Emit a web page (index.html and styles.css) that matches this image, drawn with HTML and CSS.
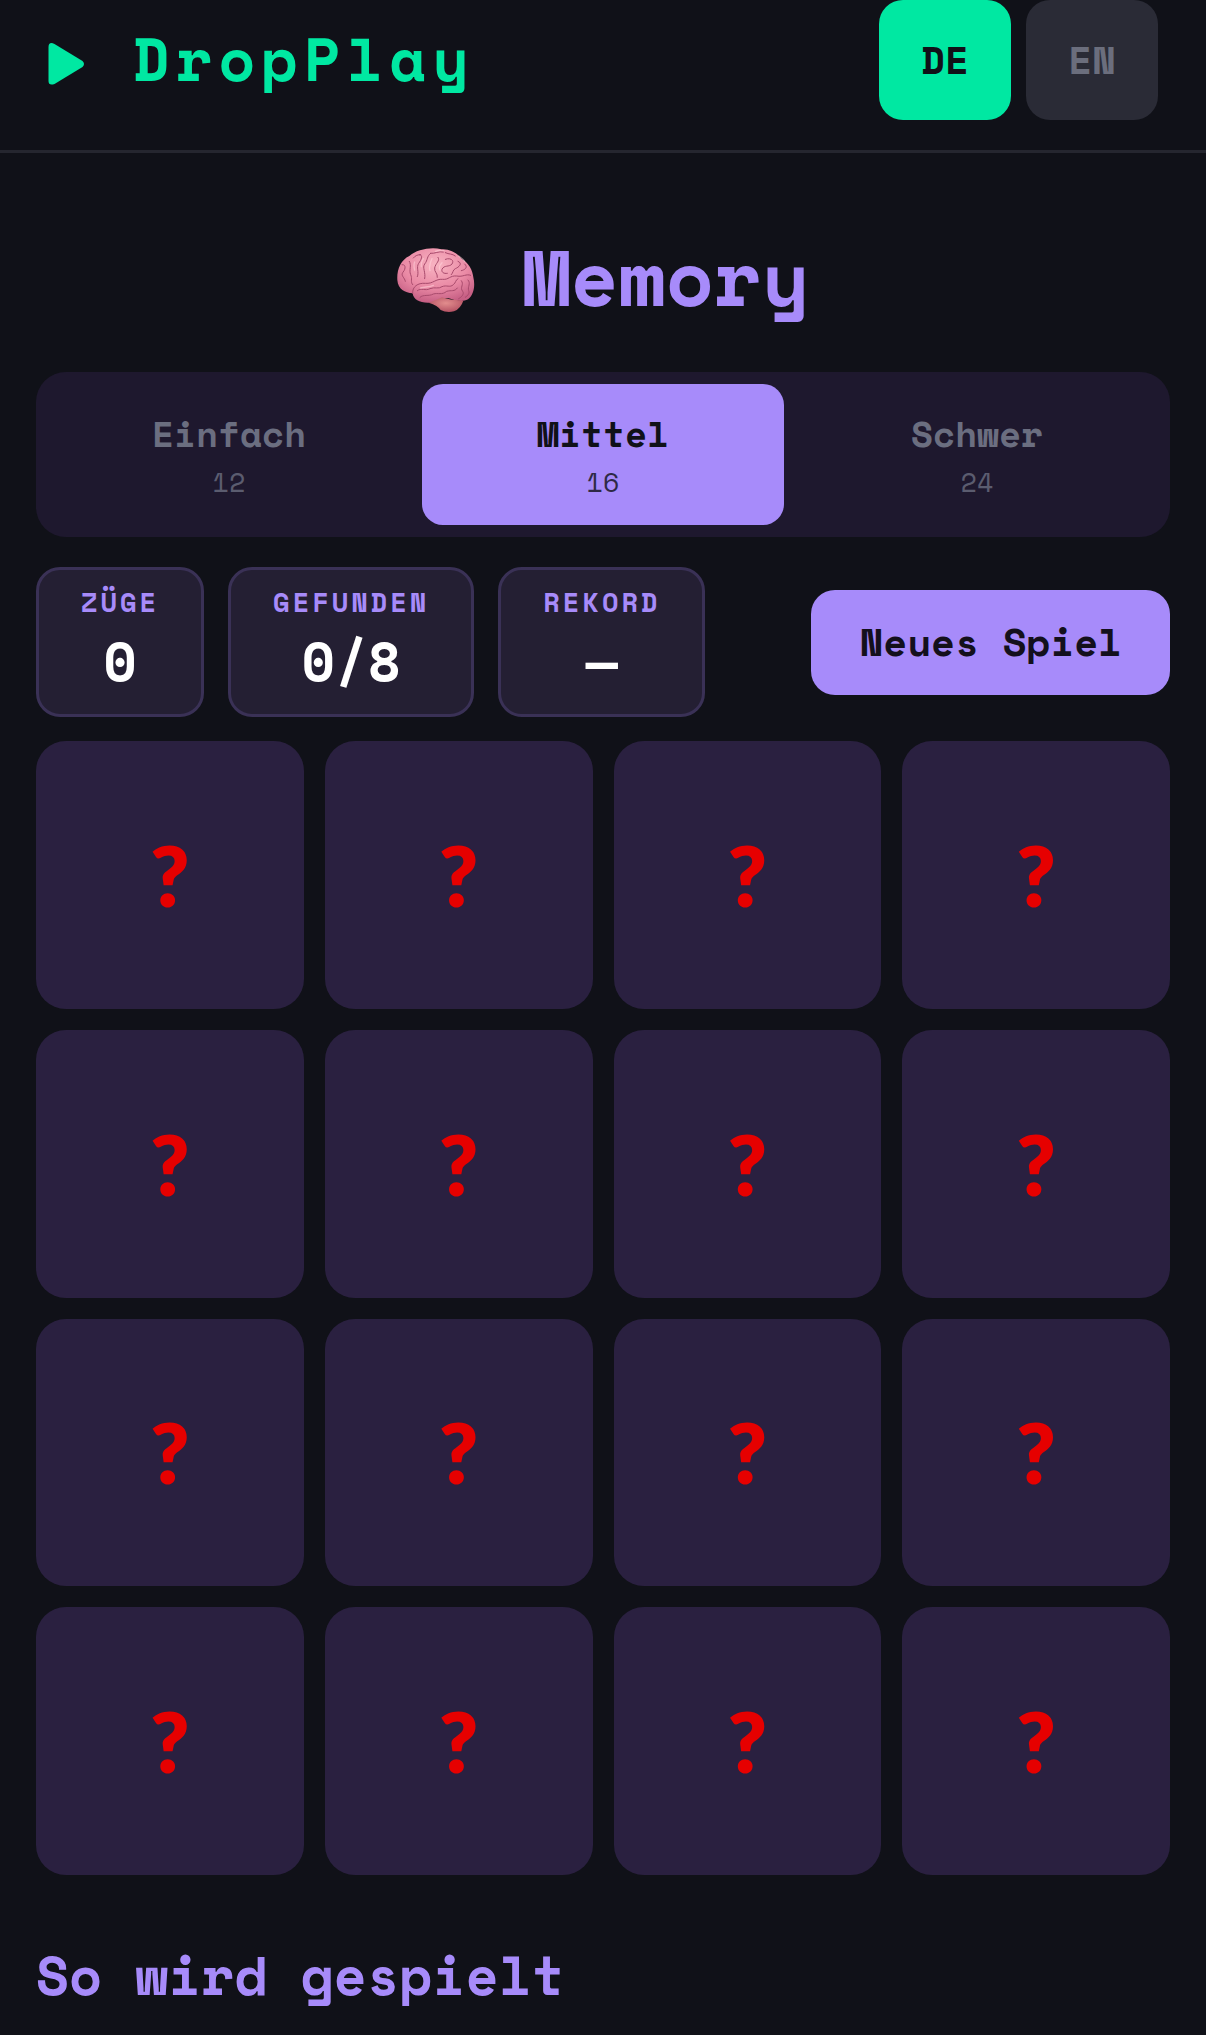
FILE: index.html
```html
<!DOCTYPE html>
<html lang="de">
<head>
<meta charset="utf-8">
<meta name="viewport" content="width=device-width, initial-scale=1">
<title>DropPlay – Memory</title>
<link rel="stylesheet" href="styles.css">
</head>
<body>
<header class="topbar">
  <a class="logo" href="#">
    <svg class="logo-icon" viewBox="0 0 36 42" aria-hidden="true"><path d="M0 4Q0 0 3 0Q4 0 6 1L34 18Q37 21 34 24L6 41Q0 43 0 38Z" fill="currentColor"/></svg>
    <span>DropPlay</span>
  </a>
  <nav class="langs" aria-label="Sprache">
    <button class="lang lang-active" type="button">DE</button>
    <button class="lang" type="button">EN</button>
  </nav>
</header>
<main class="page">
  <h1 class="title">
    <svg class="brain" viewBox="81 84 234 192" aria-hidden="true">
      <defs>
        <radialGradient id="lobe" cx="0.5" cy="0.3" r="0.7"><stop offset="0" stop-color="#f8b4c2"/><stop offset="0.6" stop-color="#ea8aa5"/><stop offset="1" stop-color="#c65f84"/></radialGradient>
        <radialGradient id="stem" cx="0.5" cy="0.4" r="0.6"><stop offset="0" stop-color="#e28d8d"/><stop offset="1" stop-color="#b55264"/></radialGradient>
      </defs>
      <path d="M82 180C80 150 92 120 118 108C140 88 185 80 214 88C240 86 262 100 274 116C296 128 308 150 310 172C316 195 312 225 294 238C275 248 252 240 236 235C215 232 205 248 180 248C152 250 130 240 128 220C105 218 84 208 82 180Z" fill="url(#lobe)"/>
      <path d="M176 248Q206 238 216 232Q238 240 280 242Q272 266 252 274Q230 279 212 270Q204 256 176 248Z" fill="url(#stem)"/>
      <g fill="none" stroke="#a84a6c" stroke-width="3" stroke-linecap="round" stroke-linejoin="round">
        <path d="M128 220C126 200 144 188 166 190C190 192 196 176 218 178C236 180 240 166 260 168C280 172 288 160 302 166"/>
        <path d="M96 134C110 132 106 150 98 158C92 168 104 172 106 184M118 124C126 136 116 150 122 164C128 176 120 186 128 194"/>
        <path d="M148 104C162 104 152 122 146 130C138 142 148 156 142 170M130 114C136 106 144 104 152 104"/>
        <path d="M182 100C170 108 174 120 164 132C156 144 168 156 164 176M182 100C194 102 206 92 220 96"/>
        <path d="M204 112C212 122 196 130 194 144C192 156 204 160 202 172M226 98C238 104 246 100 256 108"/>
        <path d="M226 118C240 112 254 120 246 132C238 142 222 134 216 148C214 156 220 162 232 160"/>
        <path d="M264 124C280 130 266 142 256 146C248 150 250 158 244 164M284 132C296 142 284 150 274 152"/>
        <path d="M142 212C154 202 166 214 180 206C194 200 206 208 216 200C230 194 240 204 250 194C258 188 256 180 264 176"/>
        <path d="M150 232C160 222 176 230 190 222C204 218 216 226 230 214C244 210 254 216 262 204M274 182C284 194 268 202 278 214C284 222 274 232 266 236"/>
        <path d="M294 180C304 190 292 200 296 212C300 220 292 228 286 232"/>
      </g>
      <g fill="none" stroke="#ffd3da" stroke-width="4" stroke-linecap="round" opacity="0.55">
        <path d="M186 116C180 128 176 138 180 152M160 116C156 124 152 128 154 140M216 128C208 136 206 142 210 150M134 126C130 136 132 142 134 150M266 108C274 114 280 118 284 124M196 94C206 90 214 92 222 92M152 204C164 200 178 202 190 196"/>
      </g>
    </svg>
    <span>Memory</span>
  </h1>

  <div class="levels" role="group" aria-label="Schwierigkeit">
    <button class="level" type="button"><span class="level-name">Einfach</span><span class="level-count">12</span></button>
    <button class="level level-active" type="button"><span class="level-name">Mittel</span><span class="level-count">16</span></button>
    <button class="level" type="button"><span class="level-name">Schwer</span><span class="level-count">24</span></button>
  </div>

  <div class="status">
    <dl class="stats">
      <div class="stat"><dt>ZÜGE</dt><dd>0</dd></div>
      <div class="stat"><dt>GEFUNDEN</dt><dd>0/8</dd></div>
      <div class="stat"><dt>REKORD</dt><dd>—</dd></div>
    </dl>
    <button class="new-game" type="button">Neues Spiel</button>
  </div>

  <div class="board">
    <button class="card" type="button">?</button>
    <button class="card" type="button">?</button>
    <button class="card" type="button">?</button>
    <button class="card" type="button">?</button>
    <button class="card" type="button">?</button>
    <button class="card" type="button">?</button>
    <button class="card" type="button">?</button>
    <button class="card" type="button">?</button>
    <button class="card" type="button">?</button>
    <button class="card" type="button">?</button>
    <button class="card" type="button">?</button>
    <button class="card" type="button">?</button>
    <button class="card" type="button">?</button>
    <button class="card" type="button">?</button>
    <button class="card" type="button">?</button>
    <button class="card" type="button">?</button>
  </div>

  <h2 class="howto">So wird gespielt</h2>
</main>
</body>
</html>
```
FILE: styles.css
```css
* {
  box-sizing: border-box;
}

body {
  margin: 0;
  background: #101118;
  color: #fff;
  font-family: "Space Mono", "DejaVu Sans Mono", "Liberation Mono", monospace;
}

button {
  margin: 0;
  padding: 0;
  border: 0;
  font: inherit;
  font-weight: 700;
  cursor: pointer;
}

.topbar {
  display: flex;
  align-items: flex-start;
  justify-content: space-between;
  padding: 0 48px 30px;
  border-bottom: 3px solid #25262f;
}

.logo {
  display: flex;
  align-items: center;
  gap: 48px;
  color: #00e8a2;
  font-size: 60px;
  font-weight: 700;
  line-height: 118px;
  letter-spacing: 6px;
  text-decoration: none;
}

.logo-icon {
  width: 37px;
  height: 42px;
  margin-top: 10px;
}

.langs {
  display: flex;
  gap: 15px;
}

.lang {
  width: 132px;
  height: 120px;
  padding-bottom: 2px;
  border-radius: 24px;
  background: #2a2b36;
  color: #6b6e7d;
  font-size: 39px;
}

.lang-active {
  background: #00e8a2;
  color: #101118;
}

.page {
  padding: 79px 36px 24px;
}

.title {
  display: flex;
  align-items: center;
  justify-content: center;
  gap: 48px;
  margin: 0 0 50px;
  color: #a78bfa;
  font-size: 78px;
  line-height: 90px;
}

.brain {
  width: 78px;
  height: 64px;
  margin-top: 6px;
}

.levels {
  display: grid;
  grid-template-columns: repeat(3, 1fr);
  gap: 12px;
  padding: 12px;
  border-radius: 30px;
  background: #1e182e;
}

.level {
  display: flex;
  flex-direction: column;
  align-items: center;
  padding: 23px 0 22px;
  border-radius: 21px;
  background: transparent;
  color: #6b6e80;
}

.level-active {
  background: #a78bfa;
  color: #101118;
}

.level-name {
  font-size: 36px;
  line-height: 54px;
}

.level-count {
  font-size: 27px;
  font-weight: 400;
  line-height: 42px;
  opacity: 0.8;
}

.status {
  display: flex;
  align-items: center;
  justify-content: space-between;
  margin: 30px 0 24px;
}

.stats {
  display: flex;
  gap: 24px;
  margin: 0;
}

.stat {
  padding: 11px 42px 16px;
  border: 3px solid #3a3156;
  border-radius: 24px;
  background: #241f33;
  text-align: center;
}

.stat dt {
  color: #a78bfa;
  font-size: 27px;
  font-weight: 700;
  line-height: 42px;
  letter-spacing: 3px;
}

.stat dd {
  margin: 0;
  font-size: 54px;
  font-weight: 700;
  line-height: 75px;
}

.new-game {
  padding: 0 48px 2px;
  border-radius: 24px;
  background: #a78bfa;
  color: #14101c;
  font-size: 39px;
  line-height: 103px;
}

.board {
  display: grid;
  grid-template-columns: repeat(4, 1fr);
  gap: 21px;
}

.card {
  aspect-ratio: 1;
  border-radius: 30px;
  background: #2a2040;
  color: #e60000;
  font-family: Lato, "Noto Sans", sans-serif;
  font-size: 84px;
  font-weight: 800;
  line-height: 90px;
}

.howto {
  margin: 64px 0 0;
  color: #a78bfa;
  font-size: 54px;
  line-height: 72px;
}
```
